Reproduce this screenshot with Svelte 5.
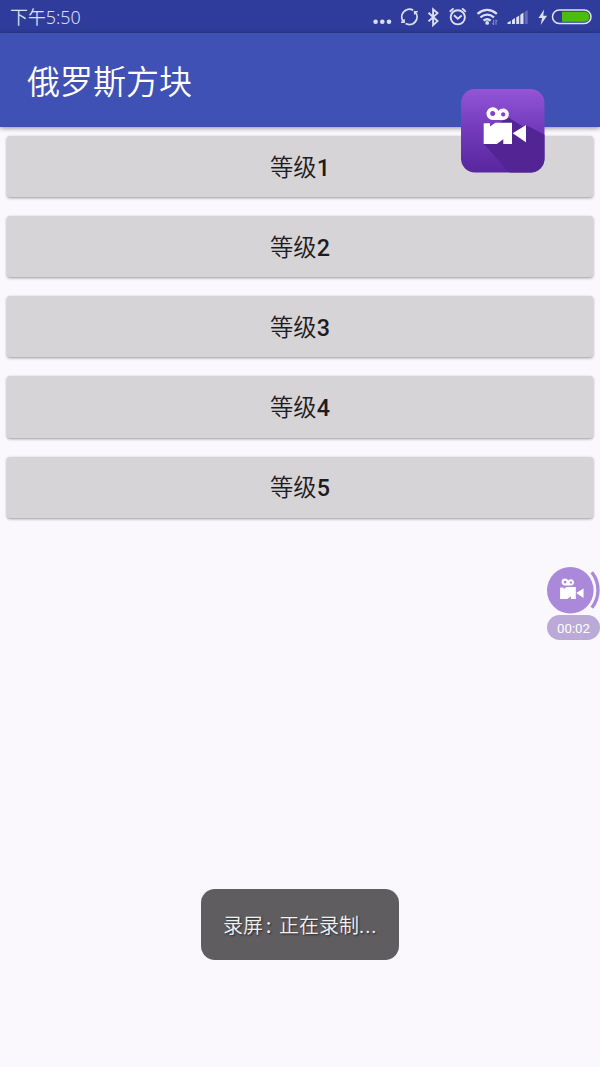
<script lang="ts">
    type Props = {
        title?: string;
        time?: string;
        elapsed?: string;
    };

    let {
        title = "俄罗斯方块",
        time = "下午5:50",
        elapsed = "00:02",
    }: Props = $props();

    const levels = [1, 2, 3, 4, 5];
    let selected = $state(0);
</script>

{#snippet camera()}
    <path
        fill-rule="evenodd"
        d="M31.7 18.3a6.4 6.4 0 0 1 5.8 3.6a5.7 5.7 0 1 1 4.7 9H31.7a6.3 6.3 0 0 1 0-12.6zM31.7 22.1a2.5 2.5 0 1 0 .01 0zM42.2 23.3a2.1 2.1 0 1 0 .01 0z"
    />
    <path d="M22.7 34.2H29v3.3l5.3-3.8H51V55h-8.7v-4.8L35.8 55H22.7z" />
    <path d="M51.7 44.3L65 36v17.3z" />
{/snippet}

<div class="screen">
    <div class="status-bar">
        <span class="time">{time}</span>
        <svg class="status-icons" width="230" height="33" viewBox="370 0 230 33">
            <g fill="#dcdff2">
                <circle cx="375.6" cy="21.8" r="2.3" />
                <circle cx="382.3" cy="21.8" r="2.3" />
                <circle cx="389" cy="21.8" r="2.3" />
            </g>
            <g fill="none" stroke="#dcdff2" stroke-width="1.7">
                <!-- sync -->
                <path d="M403.6 21.8a7.6 7.6 0 0 1 9.6-11.5M415.2 12a7.6 7.6 0 0 1-9.6 11.5" stroke-width="1.9" />
                <path d="M401 22.2h3.2v-3M417.8 11.6h-3.2v3" stroke-width="1.4" />
                <!-- bluetooth -->
                <path d="M428.5 12.8l9 8.3-4.4 4V9.3l4.4 3.8-9 8.3" stroke-width="1.9" />
                <!-- alarm -->
                <circle cx="457.8" cy="17.3" r="7.1" stroke-width="1.9" />
                <path d="M454 15.3l3.8 3.5 3.9-3.3" stroke-width="1.9" />
                <path d="M449.8 11.8l3.7-3.4M465.8 11.8l-3.7-3.4" stroke-width="1.9" />
                <!-- wifi -->
                <path d="M477.5 13.8q9.7-7.8 19.4 0M480.4 17.3q6.8-5.4 13.6 0M483.5 20.6q3.7-2.8 7.2 0" stroke-width="2.3" />
            </g>
            <circle cx="487.2" cy="22.9" r="1.9" fill="#dcdff2" />
            <path d="M493.7 24.8v-5m0 5l-1.5-1.5M496 19.8v5m0-5l1.3 1.5" stroke="#8991cd" fill="none" />
            <!-- signal -->
            <g fill="#dcdff2">
                <path d="M507.5 24v-1.4l3.3-1.8V24zM512 24v-4l3-1.9V24zM516.2 24v-6.6l3-2V24zM520.3 24v-9.3l3.2-2.1V24z" />
                <path d="M524.7 24V12l3-2v14z" fill="#626bb7" />
                <path d="M544 9.5l-5.5 8.4h3.6l-1.5 7.1 6.5-9.3h-3.8z" />
            </g>
            <rect x="552.5" y="10" width="38.5" height="13.4" rx="6.7" fill="#303a96" stroke="#e2e4f5" stroke-width="1.5" />
            <path d="M562 11.7h22.5a5 5 0 0 1 0 10H562z" fill="#4dbd0b" />
        </svg>
    </div>

    <header class="app-bar">
        <h1>{title}</h1>
    </header>

    <main class="levels">
        {#each levels as level}
            <button class="level-btn" onclick={() => (selected = level)}>
                等级<b>{level}</b>
            </button>
        {/each}
    </main>

    <svg class="launcher" width="84" height="84" viewBox="0 0 84 84">
        <defs>
            <linearGradient id="tile" x2="0" y2="1">
                <stop offset="0" stop-color="#9454d6" />
                <stop offset="0.5" stop-color="#713abb" />
                <stop offset="1" stop-color="#57259c" />
            </linearGradient>
            <clipPath id="tile-clip">
                <rect width="83.5" height="83.5" rx="14" />
            </clipPath>
        </defs>
        <g clip-path="url(#tile-clip)">
            <rect width="84" height="84" fill="url(#tile)" />
            <path d="M46.5 28L61 37l4-1 19 10v38H49L22.7 55l15-20z" fill="#532494" />
        </g>
        <g fill="#fff">{@render camera()}</g>
    </svg>

    <div class="recorder">
        <svg width="53" height="47" viewBox="0 0 53 47">
            <circle cx="23.3" cy="23.3" r="23.3" fill="#ab89da" />
            <path d="M44.8 5.2a28.5 28.5 0 0 1 0 35.5" fill="none" stroke="#ab89da" stroke-width="3.4" />
            <g fill="#fff" transform="translate(.5 1.4) scale(.555)">{@render camera()}</g>
        </svg>
        <span class="elapsed">{elapsed}</span>
    </div>

    <div class="toast" role="status">录屏<i>:</i>正在录制<span class="dots">...</span></div>
</div>

<style>
    :global(body) {
        background: #faf8fc;
    }

    .screen {
        position: relative;
        height: 1067px;
        overflow: hidden;
        background: #faf8fc;
        font-family: Roboto, "Noto Sans CJK SC", sans-serif;
    }

    .status-bar {
        display: flex;
        align-items: center;
        justify-content: space-between;
        height: 33px;
        padding-left: 10px;
        background: #303c9b;
    }

    .time {
        padding-top: 1px;
        color: #dcdff2;
        font: 350 17.9px/30px "Noto Sans", "Noto Sans CJK SC", sans-serif;
    }

    .status-icons {
        display: block;
    }

    .app-bar {
        display: flex;
        align-items: center;
        height: 94px;
        padding-left: 27px;
        background: #3f51b5;
        box-shadow: 0 1px 5px rgba(0, 0, 0, 0.45);
    }

    h1 {
        margin: 0;
        padding-top: 6px;
        color: #fff;
        font-size: 33px;
        font-weight: 350;
        line-height: 48px;
    }

    .levels {
        display: flex;
        flex-direction: column;
        gap: 19px;
        padding: 9px 7px;
    }

    .level-btn {
        height: 61.15px;
        padding: 0 0 2px;
        border: none;
        border-radius: 3px;
        background: #d6d4d7;
        box-shadow: 0 1px 3px rgba(0, 0, 0, 0.4);
        color: #1c1b1d;
        font-family: inherit;
        font-size: 23.3px;
        font-weight: 350;
    }

    .level-btn b {
        font-weight: 500;
    }

    .launcher {
        position: absolute;
        top: 89px;
        left: 461px;
    }

    .recorder {
        position: absolute;
        top: 567px;
        right: 0;
        display: flex;
        flex-direction: column;
        gap: 1px;
        width: 53px;
    }

    .elapsed {
        height: 25px;
        border-radius: 13px;
        background: #bba9d8;
        color: #fff;
        font-size: 13.3px;
        line-height: 27px;
        text-align: center;
    }

    .toast {
        position: absolute;
        top: 889px;
        left: 201px;
        box-sizing: border-box;
        width: 198px;
        height: 71px;
        padding-left: 22px;
        border-radius: 14px;
        background: #5f5d5f;
        color: #f2f1f3;
        font-size: 20px;
        font-weight: 350;
        line-height: 74px;
        text-shadow: 1px 1px 2px rgba(0, 0, 0, 0.6);
        white-space: nowrap;
    }

    .toast i {
        display: inline-block;
        width: 16px;
        font-style: normal;
        font-weight: 500;
        text-indent: 3px;
    }

    .dots {
        font-weight: 400;
        letter-spacing: 0.9px;
    }
</style>
